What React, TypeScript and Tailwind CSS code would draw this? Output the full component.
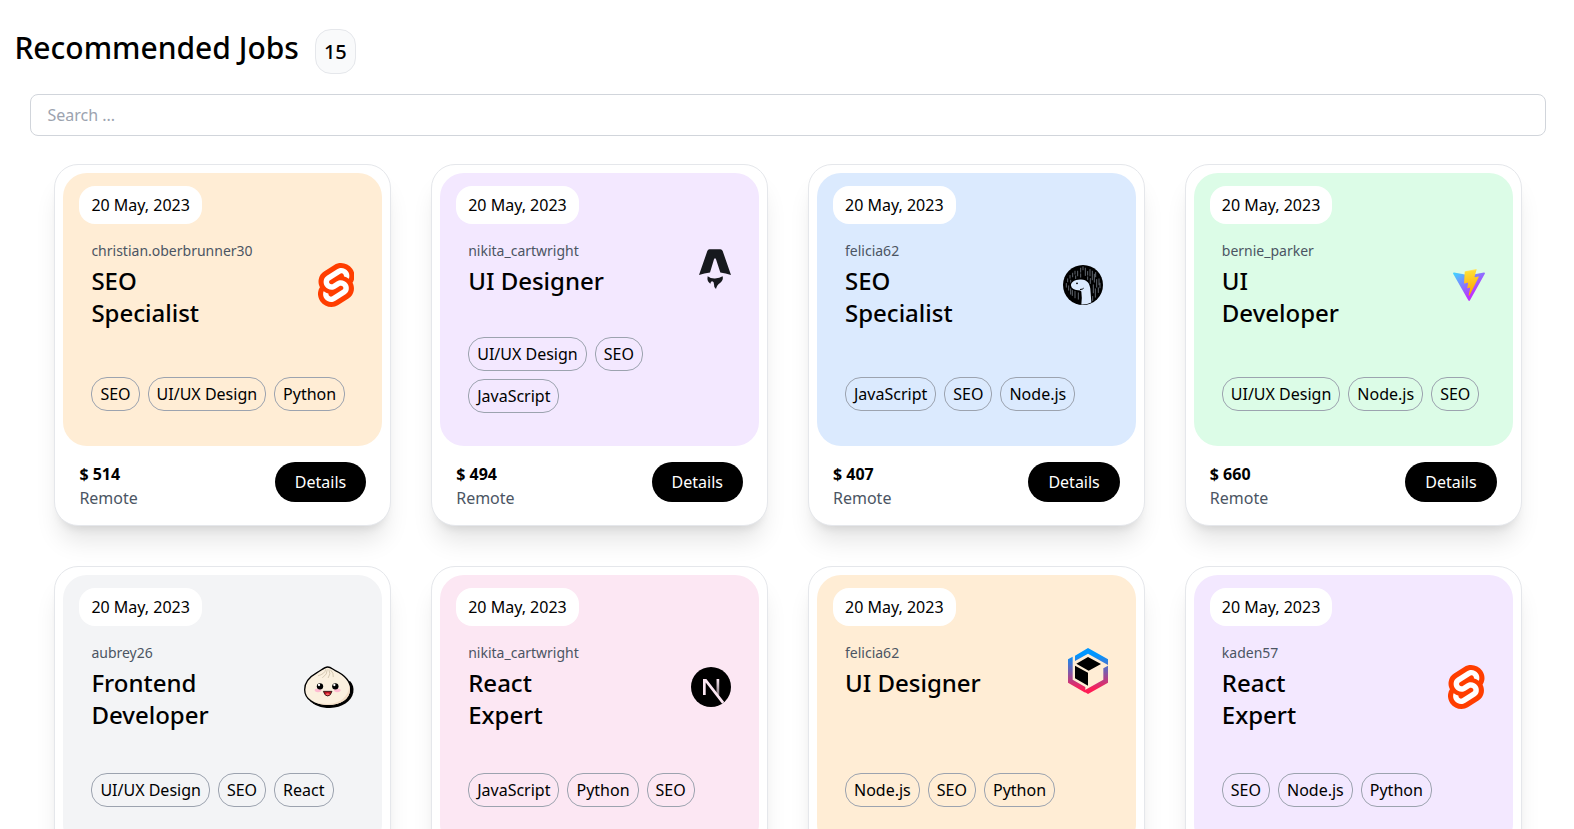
import React from "react";

function Svelte() {
  return (
    <svg width="36.500" height="44" viewBox="0 0 98.1 118">
      <path fill="#ff3e00" d="M91.8 15.6C80.9-.1 59.2-4.7 43.6 5.2L16.1 22.8C8.6 27.5 3.4 35.2 1.9 43.9c-1.3 7.3-.2 14.8 3.3 21.3-2.4 3.6-4 7.6-4.7 11.8-1.6 8.9.5 18.1 5.7 25.4 11 15.7 32.6 20.3 48.2 10.4l27.5-17.5c7.5-4.7 12.7-12.4 14.2-21.1 1.3-7.3.2-14.8-3.3-21.3 2.4-3.6 4-7.6 4.7-11.8 1.7-9-.4-18.2-5.7-25.5" />
      <path fill="#fff" d="M40.9 103.9c-8.9 2.3-18.2-1.2-23.4-8.7-3.2-4.4-4.4-9.9-3.5-15.3.2-.9.4-1.7.6-2.6l.5-1.6 1.4 1c3.3 2.4 6.9 4.2 10.8 5.4l1 .3-.1 1c-.1 1.4.3 2.9 1.1 4.1 1.6 2.3 4.4 3.4 7.1 2.7.6-.2 1.2-.4 1.7-.7L65.5 72c1.4-.9 2.3-2.2 2.6-3.8.3-1.6-.1-3.3-1-4.6-1.6-2.3-4.4-3.3-7.1-2.6-.6.2-1.2.4-1.7.7l-10.5 6.7c-1.7 1.1-3.6 1.9-5.6 2.4-8.9 2.3-18.2-1.2-23.4-8.7-3.1-4.4-4.4-9.9-3.4-15.3.9-5.2 4.1-9.9 8.6-12.7l27.5-17.5c1.7-1.1 3.6-1.9 5.6-2.5 8.9-2.3 18.2 1.2 23.4 8.7 3.2 4.4 4.4 9.9 3.5 15.3-.2.9-.4 1.7-.7 2.6l-.5 1.6-1.4-1c-3.3-2.4-6.9-4.2-10.8-5.4l-1-.3.1-1c.1-1.4-.3-2.9-1.1-4.1-1.6-2.3-4.4-3.3-7.1-2.6-.6.2-1.2.4-1.7.7L32.4 46.1c-1.4.9-2.3 2.2-2.6 3.8s.1 3.3 1 4.6c1.6 2.3 4.4 3.3 7.1 2.6.6-.2 1.2-.4 1.7-.7l10.5-6.7c1.7-1.1 3.6-1.9 5.6-2.5 8.9-2.3 18.2 1.2 23.4 8.7 3.2 4.4 4.4 9.9 3.5 15.3-.9 5.2-4.1 9.9-8.6 12.7l-27.5 17.5c-1.7 1.1-3.6 1.9-5.6 2.5" />
    </svg>
  );
}

function Astro() {
  return (
    <svg width="32" height="40" viewBox="57 41 96 120" fill="#17191e">
      <path d="M88 41.500H121Q126 42 128 47L153 119Q137 113 121 111.500L108 72Q105 66 102 72L90 111.500Q73 113 57 119L82 47Q84 42 88 41.500Z" />
      <path d="M83 123Q92 130 105 129.500Q119 129 128 123Q131 134 121 142Q110 149 108 161Q101 156 102 147Q102 139 97 138Q92 138 91 145Q80 139 83 123Z" />
    </svg>
  );
}

function Deno() {
  const rain = [
    [53, 86, 95], [49, 100, 111], [56, 107, 120], [62, 116, 132], [60, 76, 84], [68, 69, 80], [67, 121, 136],
    [75, 63, 72], [77, 77, 85], [83, 63, 77], [75, 124, 143], [85, 128, 147], [92, 54, 66], [92, 71, 81],
    [99, 50, 59], [106, 54, 76], [113, 64, 75], [120, 58, 77], [113, 80, 88], [121, 85, 100], [127, 63, 89],
    [133, 72, 96], [137, 67, 80], [140, 88, 111], [147, 86, 104], [130, 104, 128], [136, 116, 141],
    [145, 113, 127], [150, 99, 113], [62, 90, 96], [128, 139, 151],
  ];
  return (
    <svg className="mr-[5px]" width="40" height="40" viewBox="39 44.500 120 120">
      <circle cx="99" cy="104.500" r="60" fill="#000" />
      {rain.map(([x, a, b]) => (
        <line key={`${x}-${a}`} x1={x} x2={x} y1={a} y2={b} stroke="#dbeafe" strokeWidth="2.200" strokeLinecap="round" opacity="0.6" />
      ))}
      <path fill="#dbeafe" d="M63 106C62 96 76 87 93 88C112 89 119 100 121 116L124 157Q110 164 94 163Q97 146 94 124Q92 120 84 120Q65 119 63 106Z" />
      <path d="M90 118Q98 118 101 114" stroke="#000" strokeWidth="3" fill="none" />
      <circle cx="81" cy="99.500" r="2.800" fill="#000" />
    </svg>
  );
}

function Vite() {
  return (
    <svg width="32" height="32" viewBox="0 0 256 257">
      <defs>
        <linearGradient id="viteBody" x1="-.828%" x2="57.636%" y1="7.652%" y2="78.411%">
          <stop offset="0%" stopColor="#41D1FF" />
          <stop offset="100%" stopColor="#BD34FE" />
        </linearGradient>
        <linearGradient id="viteBolt" x1="43.376%" x2="50.316%" y1="2.242%" y2="89.03%">
          <stop offset="0%" stopColor="#FFEA83" />
          <stop offset="8.333%" stopColor="#FFDD35" />
          <stop offset="100%" stopColor="#FFA800" />
        </linearGradient>
      </defs>
      <path fill="url(#viteBody)" d="M255.153 37.938L134.897 252.976c-2.483 4.440-8.862 4.466-11.382.048L.875 37.958c-2.746-4.814 1.371-10.646 6.827-9.670l120.385 21.517a6.537 6.537 0 0 0 2.322-.004l117.867-21.483c5.438-.991 9.574 4.796 6.877 9.620Z" />
      <path fill="url(#viteBolt)" d="M185.432.063L96.440 17.501a3.268 3.268 0 0 0-2.634 3.014l-5.474 92.456a3.268 3.268 0 0 0 3.997 3.378l24.777-5.718c2.318-.535 4.413 1.507 3.936 3.838l-7.361 36.047c-.495 2.426 1.782 4.500 4.151 3.780l15.304-4.649c2.372-.720 4.652 1.360 4.150 3.788l-11.698 56.621c-.732 3.542 3.979 5.473 5.943 2.437l1.313-2.028l72.516-144.720c1.215-2.423-.880-5.186-3.540-4.672l-25.505 4.922c-2.396.462-4.435-1.770-3.759-4.114l16.646-57.705c.677-2.350-1.370-4.583-3.769-4.113Z" />
    </svg>
  );
}

function Bun() {
  return (
    <svg width="50" height="42" viewBox="27 32 150 126">
      <path d="M165 77C174 86 177 98 175 111C169 140 141 157 105 158C78 158 56 149 45 136Z" fill="#000" />
      <path d="M98 35C106 35 111 40 121 46C142 56 167 74 167 103C167 132 137 151 98 151C58 151 29 131 29 103C29 77 48 62 66 52C79 45 88 35 98 35Z" fill="#fbf0df" stroke="#000" strokeWidth="4" />
      <path d="M163 87C164 121 138 145 98 146Q76 146 60 140Q74 149 98 149C137 149 165 131 165 103Q165 94 163 87Z" fill="#f2ddc6" />
      <path d="M92 43Q90 56 70 61M97 43Q98 57 83 67M102 43Q109 56 100 67M107 44Q117 53 115 64" fill="none" stroke="#cfc3ab" strokeWidth="2.600" strokeLinecap="round" />
      <ellipse cx="69" cy="105" rx="10" ry="5.500" fill="#febbd0" />
      <ellipse cx="127" cy="105" rx="10" ry="5.500" fill="#febbd0" />
      <circle cx="75" cy="93" r="9.500" />
      <circle cx="121" cy="93" r="9.500" />
      <circle cx="72" cy="89" r="3.500" fill="#fff" />
      <circle cx="118" cy="89" r="3.500" fill="#fff" />
      <path d="M85 108H111Q107 122 98 122Q89 122 85 108Z" fill="#b71422" stroke="#000" strokeWidth="2" strokeLinejoin="round" />
      <path d="M91 117Q98 111 105 117Q98 123 91 117Z" fill="#ff6164" />
    </svg>
  );
}

function Next() {
  return (
    <svg width="40" height="40" viewBox="0 0 180 180">
      <defs>
        <linearGradient id="nextStem" x1="121" y1="54" x2="120.800" y2="126" gradientUnits="userSpaceOnUse">
          <stop stopColor="#fce7f3" />
          <stop offset="1" stopColor="#fce7f3" stopOpacity="0.500" />
        </linearGradient>
      </defs>
      <circle cx="90" cy="90" r="90" />
      <path fill="#fce7f3" d="M149.508 157.520L69.142 54H54V125.970H66.114V69.384L139.999 164.845C143.333 162.614 146.509 160.165 149.508 157.520Z" />
      <rect x="115" y="54" width="12" height="72" fill="url(#nextStem)" />
    </svg>
  );
}

function Turbo() {
  return (
    <svg width="40" height="46" viewBox="39 24 120 138">
      <defs>
        <linearGradient id="cubeRing" x1="99" y1="45" x2="99" y2="148" gradientUnits="userSpaceOnUse">
          <stop stopColor="#0096ff" />
          <stop offset="1" stopColor="#ff1e56" />
        </linearGradient>
      </defs>
      <path fill="url(#cubeRing)" d="M60 47L99 24L159 58V75L99 41L60 63Z" />
      <path fill="url(#cubeRing)" d="M39 58L53 50V119L91 141V158L39 128Z" />
      <path fill="url(#cubeRing)" d="M145 85L159 77V128L99 162L86 154V152L145 119Z" />
      <path d="M64 71L99 51L138 72L101 92ZM60 77L99 98V137L60 115Z" />
    </svg>
  );
}

type Job = {
  user: string;
  title: string[];
  tags: string[];
  price: number;
  bg: string;
  tagSpace: string;
  logo: React.ReactNode;
  logoTop: string;
};

const jobs: Job[] = [
  { user: "christian.oberbrunner30", title: ["SEO", "Specialist"], tags: ["SEO", "UI/UX Design", "Python"], price: 514, bg: "bg-[#ffedd5]", tagSpace: "pt-12", logo: <Svelte />, logoTop: "pt-[22px]" },
  { user: "nikita_cartwright", title: ["UI Designer"], tags: ["UI/UX Design", "SEO", "JavaScript"], price: 494, bg: "bg-[#f3e8ff]", tagSpace: "pt-10", logo: <Astro />, logoTop: "pt-[8px]" },
  { user: "felicia62", title: ["SEO", "Specialist"], tags: ["JavaScript", "SEO", "Node.js"], price: 407, bg: "bg-[#dbeafe]", tagSpace: "pt-12", logo: <Deno />, logoTop: "pt-[24px]" },
  { user: "bernie_parker", title: ["UI", "Developer"], tags: ["UI/UX Design", "Node.js", "SEO"], price: 660, bg: "bg-[#dcfce7]", tagSpace: "pt-12", logo: <Vite />, logoTop: "pt-[28px]" },
  { user: "aubrey26", title: ["Frontend", "Developer"], tags: ["UI/UX Design", "SEO", "React"], price: 582, bg: "bg-[#f3f4f6]", tagSpace: "pt-[42px]", logo: <Bun />, logoTop: "pt-[23px]" },
  { user: "nikita_cartwright", title: ["React", "Expert"], tags: ["JavaScript", "Python", "SEO"], price: 431, bg: "bg-[#fce7f3]", tagSpace: "pt-[42px]", logo: <Next />, logoTop: "pt-[24px]" },
  { user: "felicia62", title: ["UI Designer"], tags: ["Node.js", "SEO", "Python"], price: 615, bg: "bg-[#ffedd5]", tagSpace: "pt-[74px]", logo: <Turbo />, logoTop: "pt-[5px]" },
  { user: "kaden57", title: ["React", "Expert"], tags: ["SEO", "Node.js", "Python"], price: 548, bg: "bg-[#f3e8ff]", tagSpace: "pt-[42px]", logo: <Svelte />, logoTop: "pt-[22px]" },
];

function JobCard({ job }: { job: Job }) {
  return (
    <article className="h-[362px] rounded-3xl border border-[#e5e7eb] bg-white p-2 shadow-xl">
      <div className={`h-[273px] rounded-3xl px-4 pt-[13px] ${job.bg}`}>
        <div className="h-[38px] w-fit rounded-2xl bg-white px-3 leading-[38px]">20 May, 2023</div>
        <div className="flex h-[42px] items-start justify-between px-3 pt-[17px]">
          <div>
            <p className="text-sm leading-5 text-[#4b5563]">{job.user}</p>
            <h2 className="pt-1 text-2xl leading-8 font-medium">
              {job.title.map((line) => (
                <span key={line} className="block">{line}</span>
              ))}
            </h2>
            <div className={`flex w-[263px] flex-wrap gap-2 ${job.tagSpace}`}>
              {job.tags.map((tag) => (
                <span key={tag} className="h-[34px] rounded-2xl border border-[#9ca3af] px-2 leading-8 whitespace-nowrap">{tag}</span>
              ))}
            </div>
          </div>
          <div className={`-ml-16 shrink-0 ${job.logoTop}`}>{job.logo}</div>
        </div>
      </div>
      <div className="flex items-start justify-between px-4 pt-4">
        <div>
          <p className="leading-6 font-bold">$ {job.price}</p>
          <p className="leading-6 text-[#4b5563]">Remote</p>
        </div>
        <button className="h-10 rounded-[20px] bg-black px-5 text-white">Details</button>
      </div>
    </article>
  );
}

export default function App() {
  return (
    <main className="h-screen overflow-hidden bg-white font-['Noto_Sans',sans-serif] text-base text-black">
      <header className="flex items-start pl-[14.4px]">
        <h1 className="pt-7 text-3xl leading-10 font-medium">Recommended Jobs</h1>
        <span className="mt-[29px] ml-4 flex h-[45px] items-center rounded-2xl border border-[#e5e7eb] bg-[#f9fafb] px-2 text-xl font-medium">15</span>
      </header>
      <div className="pt-5 pr-[27.6px] pl-[30.4px]">
        <input className="block h-[42px] w-full rounded-lg border border-[#d1d5db] px-4 placeholder:text-[#9ca3af]" placeholder="Search ..." />
      </div>
      <section className="grid grid-cols-4 gap-10 pt-7 pr-[52.4px] pl-[54.4px]">
        {jobs.map((job, i) => (
          <JobCard key={i} job={job} />
        ))}
      </section>
    </main>
  );
}
